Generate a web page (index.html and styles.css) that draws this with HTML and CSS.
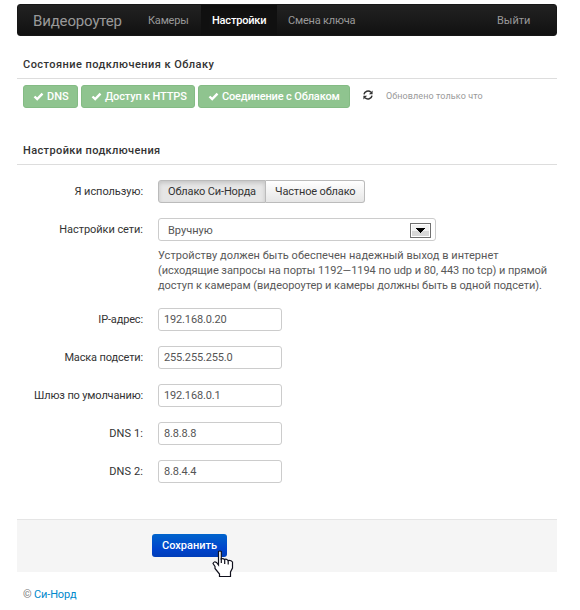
FILE: index.html
```html
<!DOCTYPE html>
<html lang="ru">
<head>
<meta charset="utf-8">
<title>Видеороутер</title>
<link rel="stylesheet" href="styles.css">
</head>
<body>
<div class="container">
  <nav class="navbar">
    <a class="brand">Видеороутер</a>
    <a class="nav-item cameras">Камеры</a>
    <a class="nav-item active">Настройки</a>
    <a class="nav-item key">Смена ключа</a>
    <a class="nav-item logout">Выйти</a>
  </nav>

  <section>
    <h2 class="legend legend-status">Состояние подключения к Облаку</h2>
    <div class="status">
      <span class="badge badge-dns"><svg class="check" viewBox="0 0 11 10"><path d="M1.5 4.5 4.2 7.1 9.5 1.7"/></svg><span>DNS</span></span>
      <span class="badge badge-https"><svg class="check" viewBox="0 0 11 10"><path d="M1.5 4.5 4.2 7.1 9.5 1.7"/></svg><span>Доступ к HTTPS</span></span>
      <span class="badge badge-cloud"><svg class="check" viewBox="0 0 11 10"><path d="M1.5 4.5 4.2 7.1 9.5 1.7"/></svg><span>Соединение с Облаком</span></span>
      <svg class="refresh" viewBox="0 0 10 10"><path class="arc" d="M1 4.4C1.4 1.3 5.6-.1 8 2.3M9 5.6C8.6 8.7 4.4 10.1 2 7.7"/><path class="tip" d="M9.6.5V4.2H5.9ZM.4 9.5V5.8H4.1Z"/></svg>
      <span class="updated">Обновлено только что</span>
    </div>
  </section>

  <form class="settings">
    <h2 class="legend legend-settings">Настройки подключения</h2>
    <div class="row">
      <label class="label label-cloud">Я использую:</label>
      <div class="toggle"><span class="option selected">Облако Си-Норда</span><span class="option private">Частное облако</span></div>
    </div>
    <div class="row row-network">
      <label class="label label-cloud">Настройки сети:</label>
      <div>
        <div class="select"><span>Вручную</span><span class="arrow"><svg viewBox="0 0 9 5"><path d="M0 0H9V1H8V2H7V3H6V4H5V5H4V4H3V3H2V2H1V1H0Z"/></svg></span></div>
        <p class="help"><span class="help-lead">Устройству должен быть обеспечен надежный выход в интернет</span><br>(исходящие запросы на порты 1192—1194 по udp и 80, 443 по tcp) и прямой<br>доступ к камерам (видеороутер и камеры должны быть в одной подсети).</p>
      </div>
    </div>
    <div class="row"><label class="label">IP-адрес:</label><div class="input">192.168.0.20</div></div>
    <div class="row"><label class="label">Маска подсети:</label><div class="input">255.255.255.0</div></div>
    <div class="row"><label class="label">Шлюз по умолчанию:</label><div class="input">192.168.0.1</div></div>
    <div class="row"><label class="label label-dns">DNS 1:</label><div class="input">8.8.8.8</div></div>
    <div class="row"><label class="label label-dns">DNS 2:</label><div class="input">8.8.4.4</div></div>
    <div class="actions">
      <div class="save">Сохранить
        <svg class="cursor" viewBox="0 0 22 28"><path d="M6.5 1.5Q8 .5 9.3 1.5V9Q11 8 12.5 9.5Q14.5 8.5 16 10.5Q19 10 20.5 12V18L18.5 22V26.5H7.5V24L3 18.5V16.5L1 13.5Q2 11 4.5 12.5L6.5 15Z"/><path class="fingers" d="M9.3 8V13M12.7 9V14M16.2 10.5V14.5"/></svg>
      </div>
    </div>
  </form>
  <footer class="footer">© <a>Си-Норд</a></footer>
</div>
</body>
</html>
```
FILE: styles.css
```css
* { box-sizing: border-box; }
body {
  margin: 0;
  background: #fff;
  color: #333;
  font: 11px/15px Roboto, "Liberation Sans", sans-serif;
}
svg { display: block; flex: none; }
.container { width: 540px; margin: 4px 0 0 17px; }

.navbar {
  display: flex;
  height: 32px;
  border: 1px solid #171717;
  border-radius: 3px;
  background: linear-gradient(#222, #111);
  color: #999;
  line-height: 31px;
  white-space: nowrap;
}
.brand { width: 115px; padding-left: 15px; font-size: 15px; line-height: 32px; letter-spacing: -.15px; }
.nav-item { padding-left: 15px; letter-spacing: -.2px; }
.cameras { width: 68px; }
.active {
  width: 76px;
  padding-left: 11px;
  background: #111;
  box-shadow: inset 0 3px 8px rgba(0, 0, 0, .125);
  color: #fff;
  font-weight: 500;
}
.key { padding-left: 11px; }
.logout { width: 59px; margin-left: auto; padding-left: 0; letter-spacing: 0; }

.legend {
  height: 24px;
  margin: 0;
  padding: 2px 6px 0;
  border-bottom: 1px solid #ddd;
  font-size: 11px;
  font-weight: 500;
  line-height: 15px;
}
.legend-status { margin-top: 19px; letter-spacing: .45px; }
.legend-settings { margin-top: 33px; letter-spacing: .38px; }

.status { display: flex; gap: 3px; margin: 6px 0 0 6px; }
.badge {
  display: flex;
  align-items: center;
  gap: 3px;
  height: 23px;
  padding-left: 9px;
  border: 1px solid #84bb84;
  border-radius: 3px;
  background: #8fc48f;
  color: #fff;
  font-weight: 500;
  letter-spacing: -.15px;
  white-space: nowrap;
}
.badge-dns { width: 55px; letter-spacing: 0; }
.badge-https { width: 114px; }
.badge-cloud { width: 152px; }
.check { width: 11px; height: 10px; fill: none; stroke: #fff; stroke-width: 2.4; }
.refresh { width: 10px; height: 10px; margin: 5px 0 0 10px; }
.arc { fill: none; stroke: #333; stroke-width: 1.5; }
.tip { fill: #333; }
.updated { margin: 4px 0 0 10px; color: #999; font-size: 9px; letter-spacing: .1px; }

.row { display: flex; margin-top: 15px; }
.label {
  flex: none;
  width: 126px;
  margin-right: 15px;
  padding-top: 4px;
  letter-spacing: -.15px;
  text-align: right;
}
.label-cloud { letter-spacing: -.05px; }
.label-dns { letter-spacing: .1px; }
.toggle { display: flex; height: 23px; line-height: 21px; letter-spacing: -.15px; }
.option {
  width: 108px;
  padding-left: 9px;
  border: 1px solid #bbb;
  border-radius: 3px 0 0 3px;
  white-space: nowrap;
}
.selected { background: #e6e6e6; box-shadow: inset 0 2px 4px rgba(0, 0, 0, .15); }
.private {
  width: 99px;
  border-left: 0;
  border-radius: 0 3px 3px 0;
  background: linear-gradient(#fff, #e6e6e6);
}
.select {
  display: flex;
  align-items: center;
  justify-content: space-between;
  width: 278px;
  height: 23px;
  padding: 1px 4px 0 9px;
  border: 1px solid #ccc;
  border-radius: 3px;
  color: #555;
}
.arrow {
  display: grid;
  place-items: center;
  width: 21px;
  height: 15px;
  border: 1px solid #707070;
  background: linear-gradient(#f2f2f2 50%, #d8d8d8 50%);
  box-shadow: inset 0 0 0 1px #fff;
}
.arrow svg { width: 9px; height: 5px; }
.help { margin: 7px 0 0; color: #595959; letter-spacing: -.04px; white-space: nowrap; }
.help-lead { letter-spacing: .04px; }
.input {
  width: 124px;
  height: 23px;
  padding-left: 5px;
  border: 1px solid #ccc;
  border-radius: 3px;
  color: #555;
  line-height: 21px;
  letter-spacing: -.15px;
}
.actions {
  height: 53px;
  margin-top: 36px;
  padding: 14px 0 0 135px;
  border-top: 1px solid #e5e5e5;
  background: #f5f5f5;
}
.save {
  position: relative;
  width: 75px;
  height: 23px;
  padding-left: 10px;
  border-radius: 3px;
  background: linear-gradient(#0064cc, #0044cc 65%, #003db8);
  color: #fff;
  font-weight: 500;
  line-height: 23px;
}
.cursor {
  position: absolute;
  left: 60px;
  top: 16px;
  width: 22px;
  height: 28px;
  fill: #fff;
  stroke: #10101c;
  stroke-width: 1.2;
}
.fingers { fill: none; }
.footer { margin: 15px 0 0 6px; color: #777; letter-spacing: -.15px; }
.footer a { color: #08c; }
```
